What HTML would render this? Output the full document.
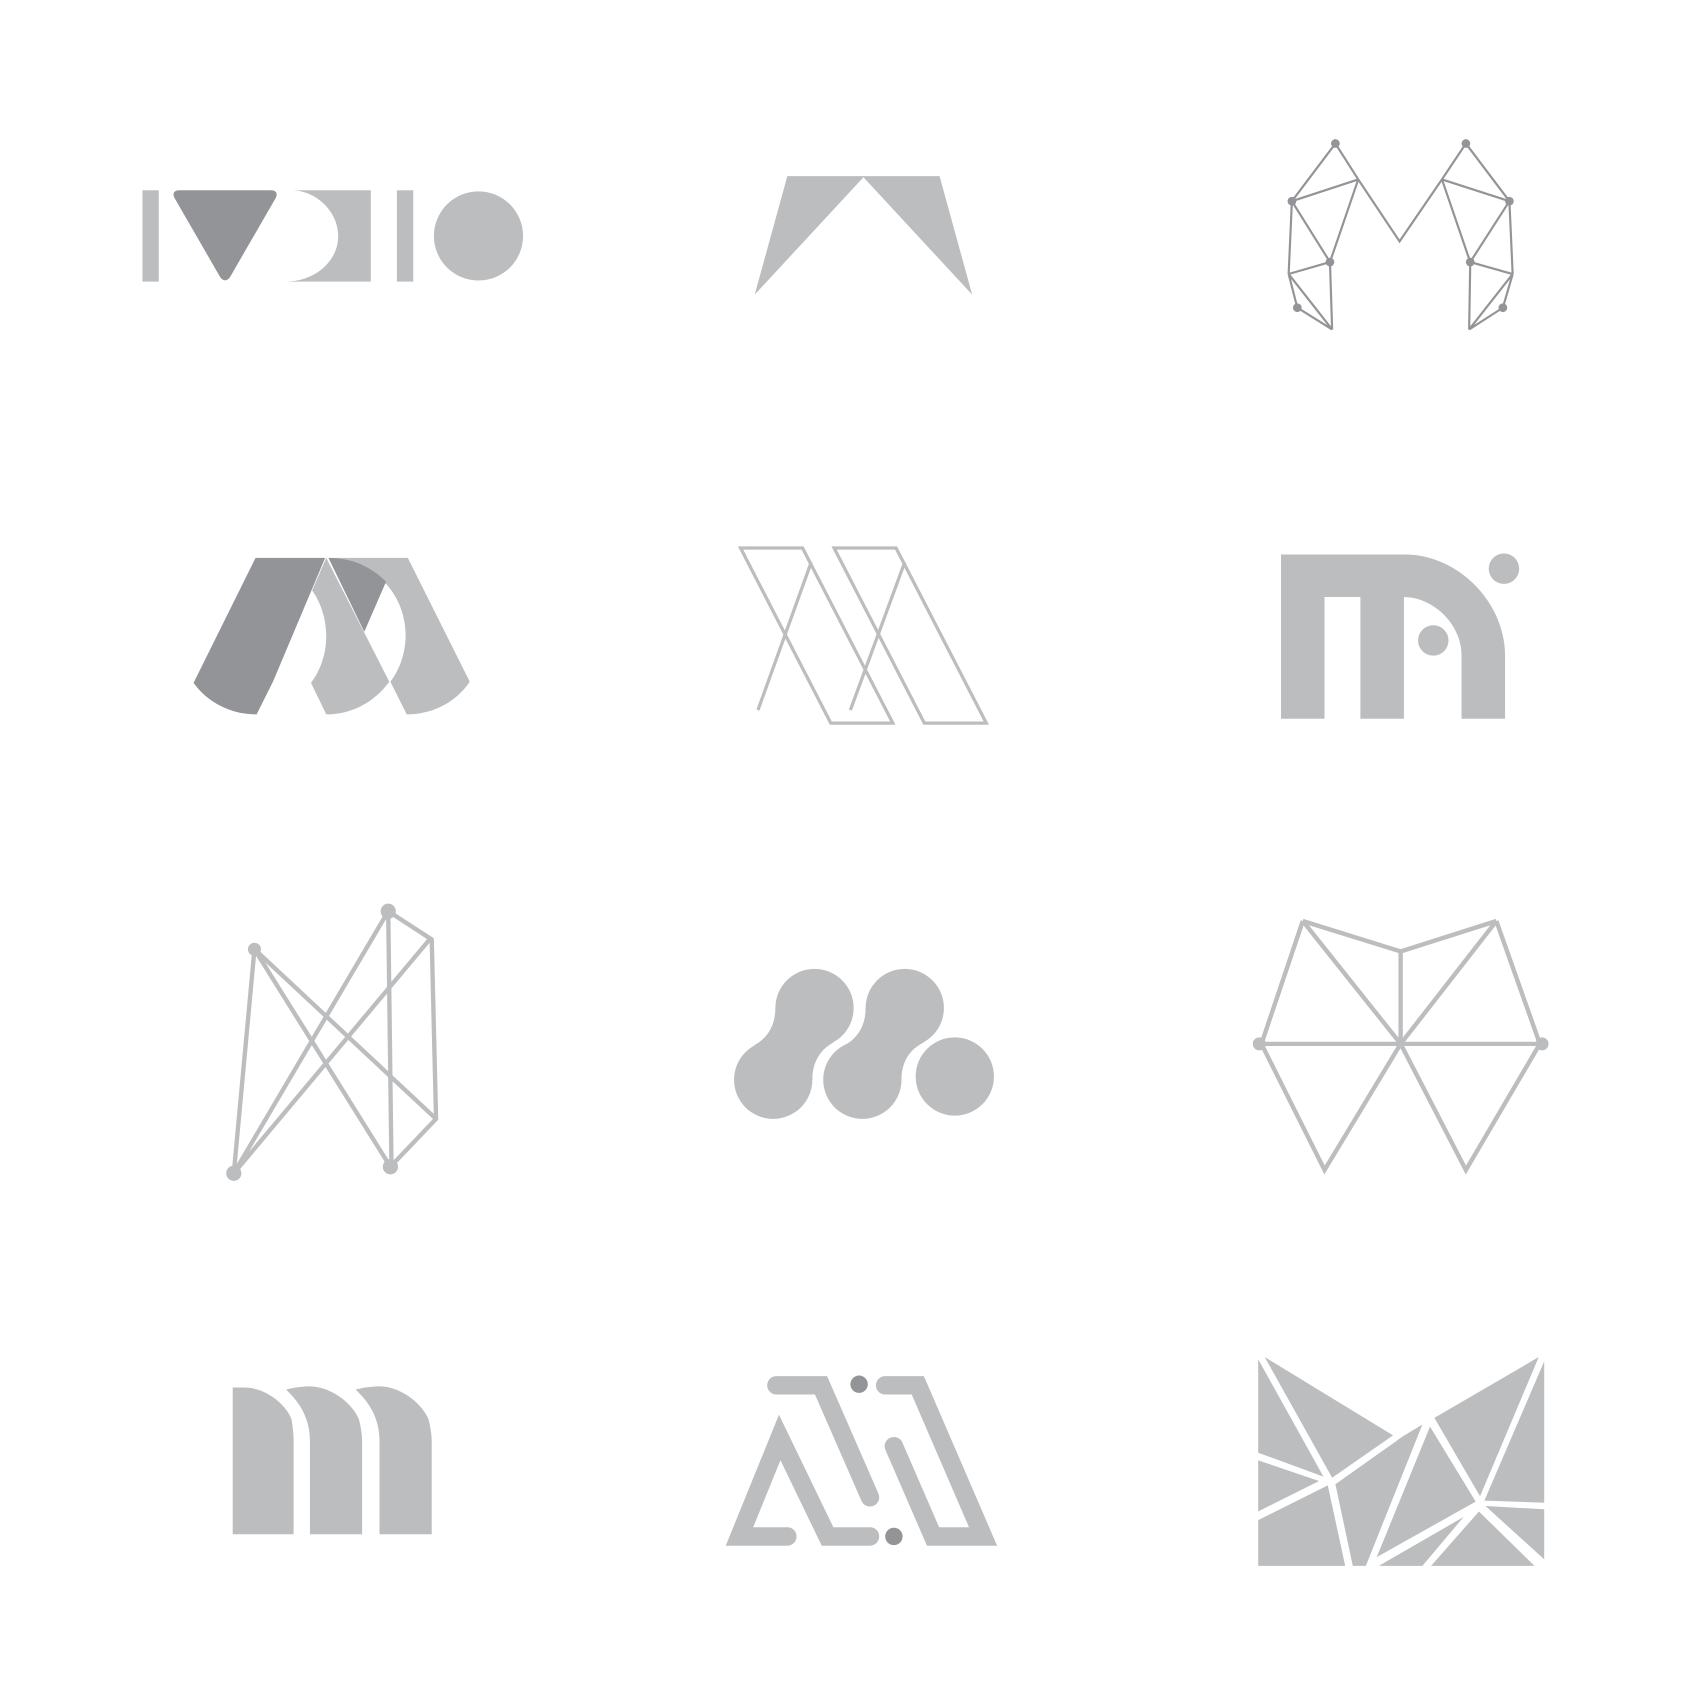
<!DOCTYPE html>
<html><head><meta charset="utf-8"><style>html,body{margin:0;padding:0;background:#fff}svg{display:block}</style></head><body>
<svg width="1691" height="1705" viewBox="0 0 1555 1568" preserveAspectRatio="none" xmlns="http://www.w3.org/2000/svg">
<rect width="1560" height="1573" fill="#fff"/>
<g fill="#bcbdbf">
<rect x="131" y="175" width="15" height="84"/>
<path d="M268,175 H341 V259 H262 C290,259 311,240 311,217 C311,194 290,175 268,175 Z"/>
<rect x="365" y="175" width="15" height="84"/>
<circle cx="440" cy="217" r="41"/>
</g>
<path d="M165,175 H249 C254,175 256,178 253,183 L212,254 C209,259 205,259 202,254 L161,183 C158,178 160,175 165,175 Z" fill="#939497"/>
<path d="M724,162 H864 L894,271 L794,163 L694,271 Z" fill="#bcbdbf"/>
<g stroke="#939497" stroke-width="2" fill="none">
<polyline points="1188,185 1228,132 1249,165 1287,222 1326,165 1348,132 1388,185"/>
<line x1="1188" y1="185" x2="1249" y2="165"/><line x1="1326" y1="165" x2="1388" y2="185"/>
<line x1="1188" y1="185" x2="1223" y2="241"/><line x1="1249" y1="165" x2="1223" y2="241"/>
<line x1="1326" y1="165" x2="1352" y2="241"/><line x1="1388" y1="185" x2="1352" y2="241"/>
<line x1="1188" y1="185" x2="1185" y2="252"/><line x1="1388" y1="185" x2="1391" y2="252"/>
<line x1="1185" y1="252" x2="1223" y2="241"/><line x1="1391" y1="252" x2="1352" y2="241"/>
<line x1="1223" y1="241" x2="1225" y2="303"/><line x1="1352" y1="241" x2="1351" y2="303"/>
<polyline points="1185,252 1193,283 1225,303 1185,252"/>
<polyline points="1391,252 1382,283 1351,303 1391,252"/>
</g>
<g fill="#939497">
<circle cx="1228" cy="132" r="4"/><circle cx="1188" cy="185" r="4"/><circle cx="1223" cy="241" r="4"/><circle cx="1193" cy="283" r="4"/>
<circle cx="1348" cy="132" r="4"/><circle cx="1388" cy="185" r="4"/><circle cx="1352" cy="241" r="4"/><circle cx="1382" cy="283" r="4"/>
</g>
<g fill="#bcbdbf">
<path d="M300,513 L358,627 C344,646 323,657 300,657 L286,628 C295,616 300,601 300,585 C300,569 295,554 287,543 Z"/>
<path d="M302,513 H375 L432,627 C419,646 398,657 374,657 L359,627 C368,615 373,600 373,584 C373,545 341,513 302,513 Z"/>
</g>
<path d="M235,513 H299 L251,627 L236,657 C212,657 191,646 178,628 Z" fill="#939497"/>
<path d="M302,513 C325,513 342,522 355,535 L335,581 Z" fill="#939497"/>
<g stroke="#bcbdbf" stroke-width="3" fill="none">
<path d="M681,504 H738 L821,665 H764 Z"/><line x1="746" y1="517" x2="697" y2="653"/>
<path d="M767,504 H824 L907,665 H850 Z"/><line x1="832" y1="517" x2="782" y2="653"/>
</g>
<g fill="#bcbdbf">
<path d="M1178,510 H1292 C1340,510 1384,553 1384,603 V661 H1344 V603 C1344,573 1317,549 1291,549 V661 H1251 V549 H1218 V661 H1178 Z"/>
<circle cx="1383" cy="523" r="14"/><circle cx="1318" cy="589" r="14"/>
</g>
<g stroke="#bcbdbf" stroke-width="4" fill="none">
<line x1="234" y1="873" x2="215" y2="1079"/><line x1="234" y1="873" x2="401" y2="1029"/>
<line x1="234" y1="873" x2="359" y2="1073"/><line x1="357" y1="838" x2="215" y2="1079"/>
<line x1="357" y1="838" x2="360" y2="1073"/><line x1="395" y1="864" x2="215" y2="1079"/>
<polyline points="357,838 397,864 401,1029 359,1073"/>
</g>
<g fill="#bcbdbf">
<circle cx="234" cy="873" r="6"/><circle cx="357" cy="838" r="7"/><circle cx="359" cy="1073" r="7"/><circle cx="215" cy="1079" r="7"/>
<circle cx="749" cy="927" r="36"/><circle cx="711" cy="993" r="36"/><circle cx="832" cy="927" r="36"/><circle cx="793" cy="993" r="36"/><circle cx="878" cy="990" r="36"/>
<path d="M713,927 C713,944 705,955 694,961 L711,993 L747,993 C747,976 755,965 766,959 L749,927 Z"/>
<path d="M796,927 C796,944 788,955 777,961 L793,993 L829,993 C829,976 837,965 849,959 L832,927 Z"/>
</g>
<g stroke="#bcbdbf" stroke-width="4" fill="none">
<polyline points="1198,847 1288,875 1376,847"/>
<line x1="1198" y1="847" x2="1160" y2="960"/><line x1="1376" y1="847" x2="1416" y2="960"/>
<polyline points="1198,847 1288,960 1376,847"/>
<line x1="1288" y1="875" x2="1288" y2="960"/><line x1="1160" y1="960" x2="1416" y2="960"/>
<polyline points="1160,960 1218,1076 1288,960 1348,1076 1416,960"/>
</g>
<g fill="#bcbdbf"><circle cx="1158" cy="960" r="6"/><circle cx="1418" cy="960" r="6"/></g>
<g fill="#bcbdbf">
<path d="M214,1276 H225 C243,1276 262,1290 268,1305 C269,1310 270,1320 270,1325 V1411 H214 Z"/>
<path d="M263,1278 C270,1276 278,1275 285,1275 C303,1275 323,1289 330,1305 C332,1313 333,1320 333,1325 V1411 H285 V1325 C285,1305 276,1290 263,1278 Z"/>
<path d="M327,1278 C334,1276 342,1275 349,1275 C367,1275 387,1289 394,1305 C396,1313 397,1320 397,1325 V1411 H349 V1325 C349,1305 340,1290 327,1278 Z"/>
</g>
<g stroke="#bcbdbf" stroke-width="17" fill="none" stroke-linejoin="miter">
<path d="M714,1274 H755 L800,1377" stroke-linecap="round"/>
<path d="M724,1413 H680 L717,1322 L761,1413 H800" stroke-linecap="round"/>
<path d="M814,1274 H844 L904,1413 H858 L822,1330" stroke-linecap="round"/>
</g>
<g fill="#939497"><circle cx="790" cy="1273" r="8"/><circle cx="822" cy="1413" r="8"/></g>
<g fill="#bcbdbf">
<polygon points="1157,1250 1217,1358 1157,1336"/>
<polygon points="1163,1248 1281,1320 1225,1359"/>
<polygon points="1157,1343 1213,1362 1157,1390"/>
<polygon points="1157,1398 1221,1366 1237,1440 1157,1440"/>
<polygon points="1228,1365 1290,1321 1308,1310 1256,1440 1244,1440"/>
<polygon points="1319,1304 1415,1248 1361,1376"/>
<polygon points="1420,1252 1420,1382 1365,1380"/>
<polygon points="1315,1312 1357,1381 1266,1432"/>
<polygon points="1268,1440 1346,1395 1308,1440"/>
<polygon points="1316,1440 1360,1390 1411,1440"/>
<polygon points="1366,1385 1420,1388 1420,1434"/>
</g>
</svg>
</body></html>
